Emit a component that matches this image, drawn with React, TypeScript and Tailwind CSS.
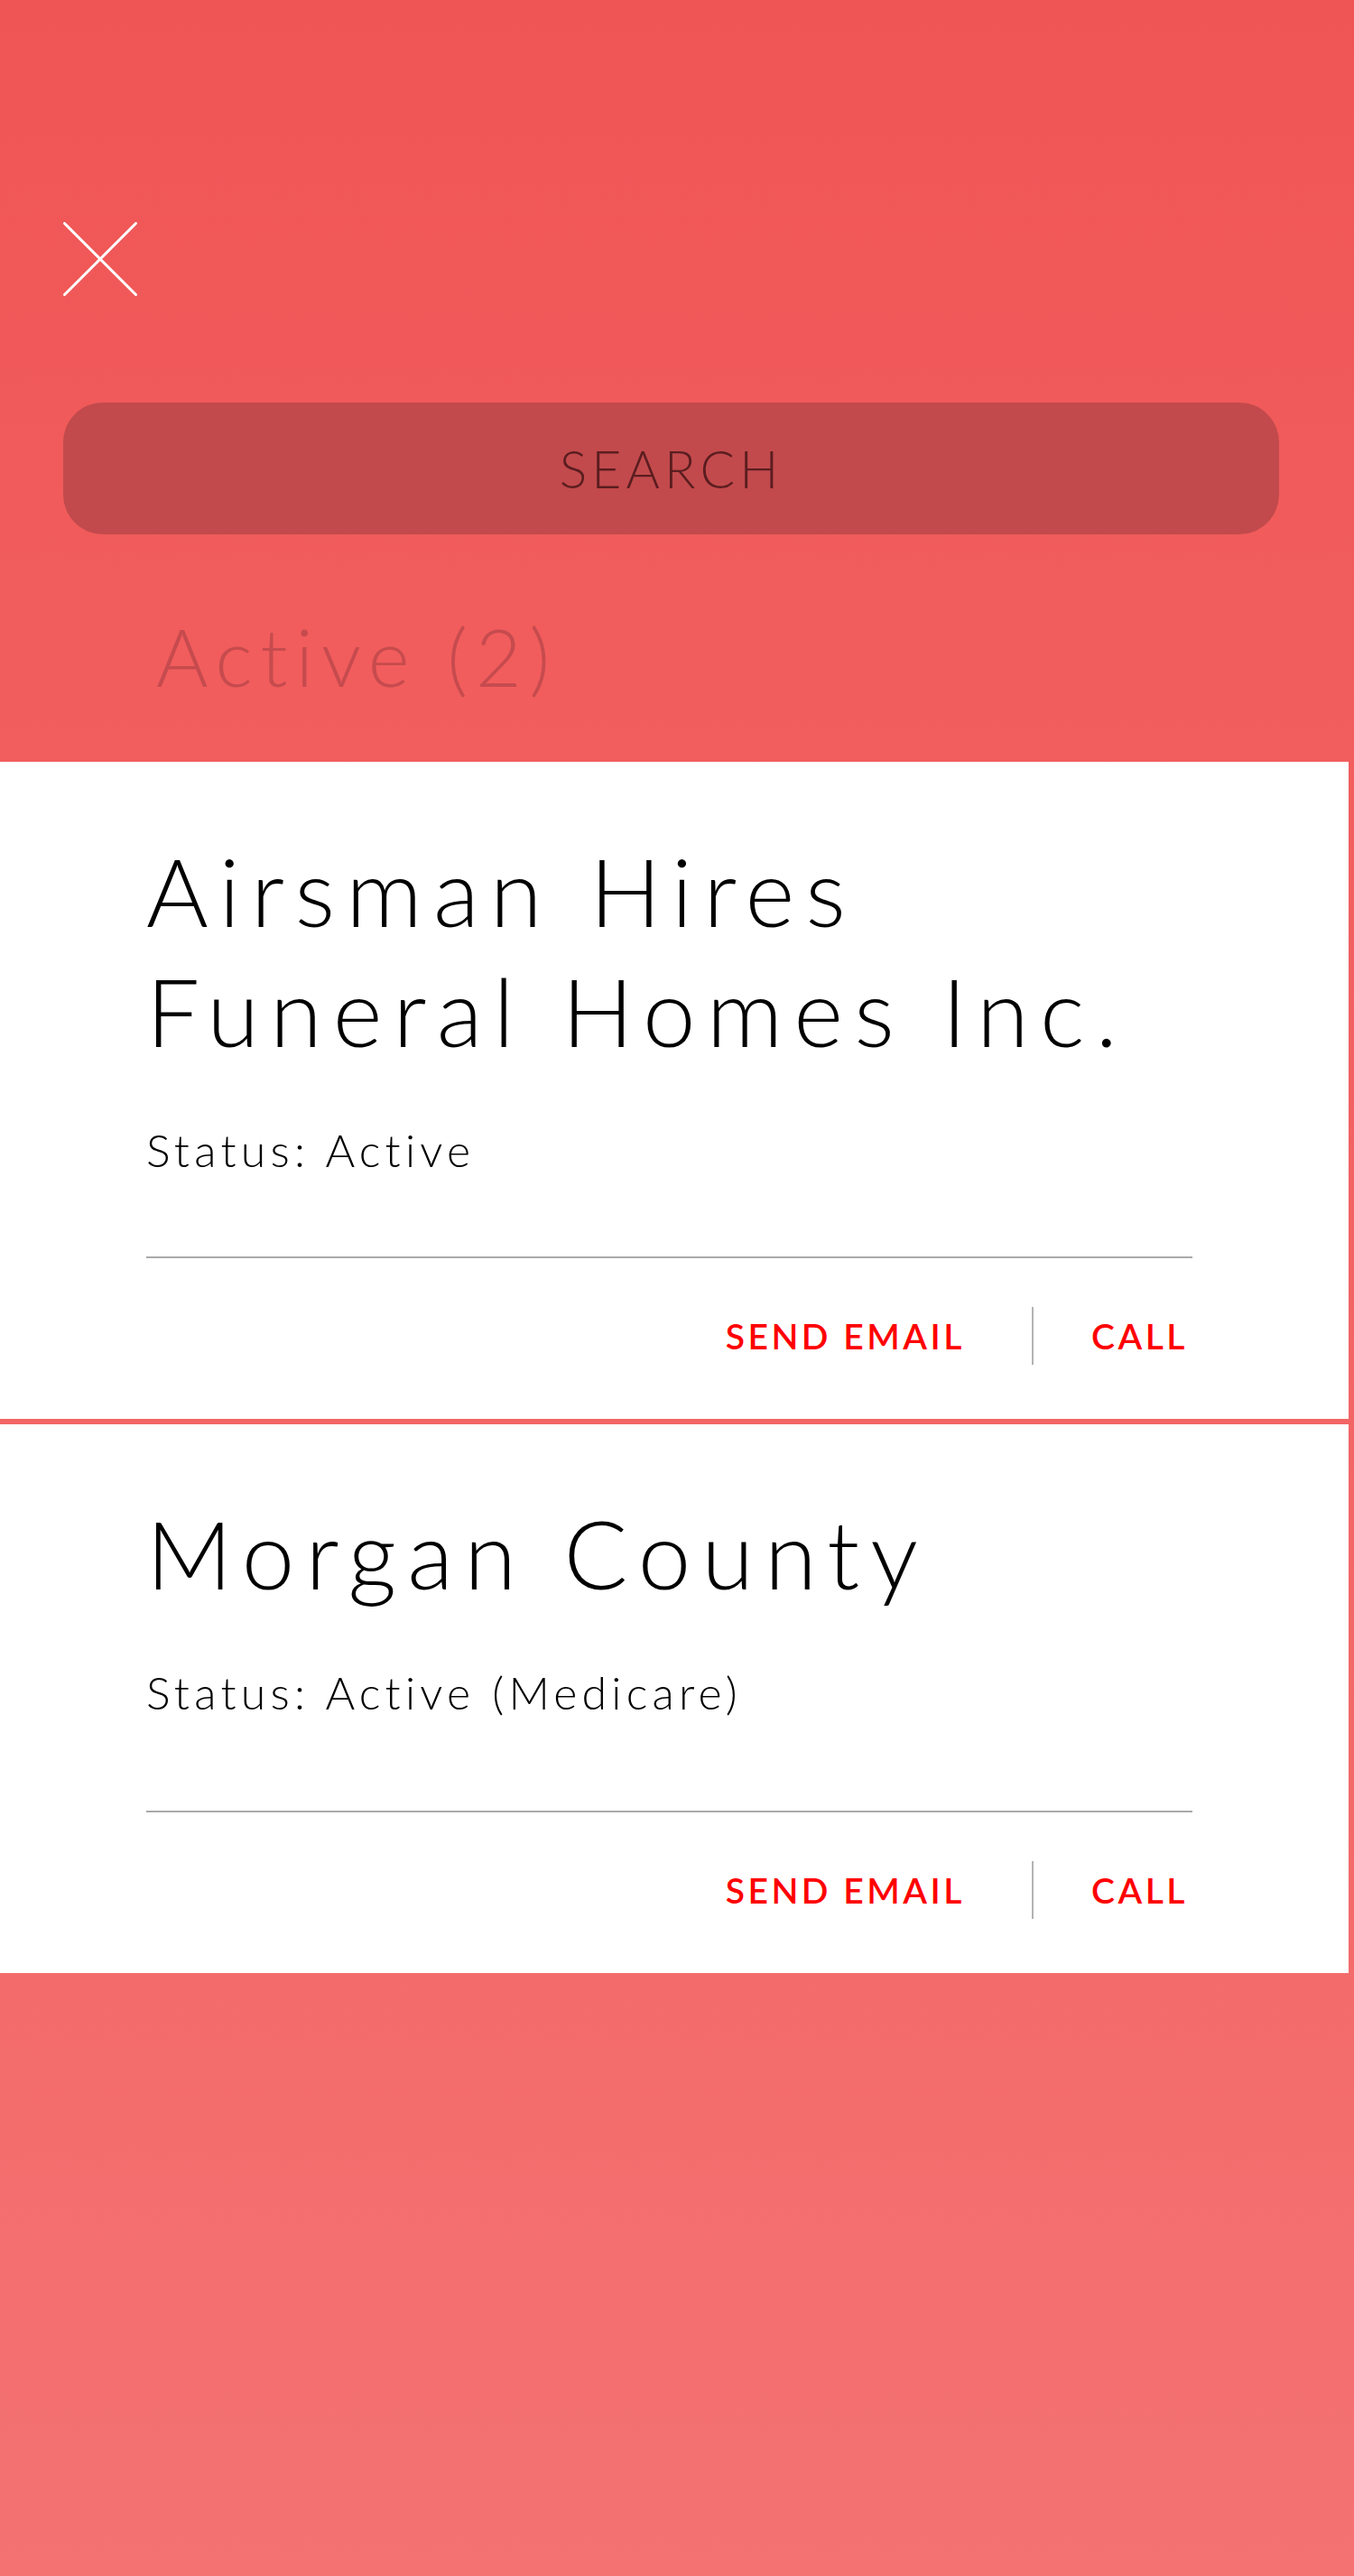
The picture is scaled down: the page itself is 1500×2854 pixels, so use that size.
import React from "react"

const font = { fontFamily: "Lato, 'Liberation Sans', sans-serif" }

type Account = {
  name: string[]
  status: string
  statusGap: string
}

const accounts: Account[] = [
  { name: ["Airsman Hires", "Funeral Homes Inc."], status: "Status: Active", statusGap: "mb-[88px]" },
  { name: ["Morgan County"], status: "Status: Active (Medicare)", statusGap: "mb-[101px]" },
]

function CloseIcon() {
  return (
    <svg width="82" height="82" viewBox="0 0 82 82" fill="none">
      <path d="M1.5 1.5 L80.5 80.5 M80.5 1.5 L1.5 80.5" stroke="#ffffff" strokeWidth="3" strokeLinecap="round" />
    </svg>
  )
}

function AccountCard({ account }: { account: Account }) {
  return (
    <div className="bg-white w-[1494px] pt-[76px] pb-[60px] pl-[162px] pr-[173px]">
      <h2 className="text-[105px] leading-[133px] font-light tracking-[0.115em] text-black">
        {account.name.map((line) => (
          <div key={line}>{line}</div>
        ))}
      </h2>
      <p className={`mt-[58px] text-[50px] leading-[60px] font-light tracking-[0.105em] text-black ${account.statusGap}`}>
        {account.status}
      </p>
      <div className="h-[2px] bg-[#aaaaaa]" />
      <div className="mt-[54px] flex items-center justify-end">
        <button className="text-[39px] leading-[47px] font-semibold tracking-[0.09em] text-[#ff0000]">SEND EMAIL</button>
        <div className="ml-[74px] mr-[64px] w-[2px] h-[64px] bg-[#b3b3b3]" />
        <button className="mr-[5px] text-[39px] leading-[47px] font-semibold tracking-[0.09em] text-[#ff0000]">CALL</button>
      </div>
    </div>
  )
}

export default function App() {
  return (
    <div style={font} className="min-h-[2854px] w-[1500px] bg-linear-to-b from-[#f05555] to-[#f47272]">
      {/* header */}
      <div className="px-[70px] pt-[246px]">
        <CloseIcon />
        <div className="mt-[118px] h-[146px] w-[1347px] rounded-[44px] bg-[#c24a4c] flex items-center justify-center">
          <span className="text-[57px] font-light tracking-[0.09em] text-[#5b1d20] leading-none">SEARCH</span>
        </div>
        <h1 className="mt-[82px] ml-[103px] text-[88px] leading-[106px] font-light tracking-[0.1em] text-[#c64b4e]">
          Active (2)
        </h1>
      </div>

      {/* list */}
      <div className="mt-[64px] flex flex-col gap-[6px]">
        {accounts.map((a) => (
          <AccountCard key={a.name[0]} account={a} />
        ))}
      </div>
    </div>
  )
}
